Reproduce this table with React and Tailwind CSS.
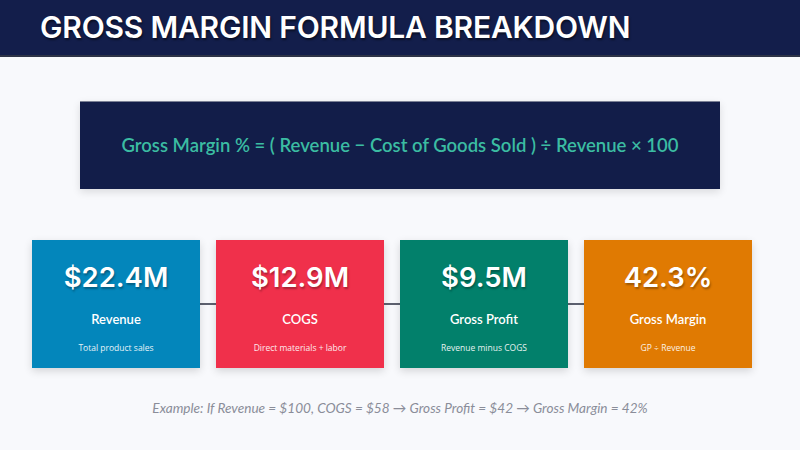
const cards = [
  { value: "$22.4M", label: "Revenue", note: "Total product sales", bg: "bg-[#0386bb]" },
  { value: "$12.9M", label: "COGS", note: "Direct materials + labor", bg: "bg-[#f0304b]" },
  { value: "$9.5M", label: "Gross Profit", note: "Revenue minus COGS", bg: "bg-[#02806b]" },
  { value: "42.3%", label: "Gross Margin", note: "GP ÷ Revenue", bg: "bg-[#e07a02]" },
];

function Card({ card }) {
  return (
    <div
      className={`${card.bg} relative z-10 flex h-[128px] w-[168px] flex-col items-center text-white shadow-[0_3px_8px_rgba(0,0,0,0.15)]`}
    >
      <div className="mt-[19px] font-['Inter',sans-serif] text-[27.5px] font-semibold leading-[36px] [text-shadow:1px_2px_2px_rgba(0,0,0,0.3)]">
        {card.value}
      </div>
      <div className="mt-[16px] font-['Lato',sans-serif] text-[13px] font-semibold leading-[16px]">
        {card.label}
      </div>
      <div className="mt-[15px] font-['Open_Sans',sans-serif] text-[8.5px] leading-[12px] opacity-90">
        {card.note}
      </div>
    </div>
  );
}

export default function App() {
  return (
    <div className="flex h-[450px] w-[800px] flex-col bg-[#f8f9fc]">
      {/* Title bar */}
      <div className="flex h-[57px] items-center border-b-2 border-[#2d3347] bg-[#131e4b] pl-[40px]">
        <h1 className="font-['Inter',sans-serif] text-[30px] font-semibold tracking-[-0.2px] text-white [text-shadow:1px_2px_2px_rgba(0,0,0,0.5)]">
          GROSS MARGIN FORMULA BREAKDOWN
        </h1>
      </div>

      {/* Formula */}
      <div className="mx-[80px] mt-[44px] flex h-[88px] items-center justify-center border-t border-[#7b8196] bg-[#121d49] shadow-[0_3px_8px_rgba(0,0,0,0.12)]">
        <p className="font-['Lato',sans-serif] text-[18.5px] font-semibold text-[#3bbca2]">
          Gross Margin % = ( Revenue − Cost of Goods Sold ) ÷ Revenue × 100
        </p>
      </div>

      {/* Cards */}
      <div className="relative ml-[32px] mt-[51px] flex w-[720px] gap-[16px]">
        <div className="absolute left-0 right-0 top-[63px] h-[2px] bg-[#5d6170]" />
        {cards.map((c) => (
          <Card key={c.label} card={c} />
        ))}
      </div>

      <p className="mt-[30px] text-center font-['Lato',sans-serif] text-[13.6px] italic text-[#8a8d99]">
        Example: If Revenue = $100, COGS = $58 → Gross Profit = $42 → Gross Margin = 42%
      </p>
    </div>
  );
}
